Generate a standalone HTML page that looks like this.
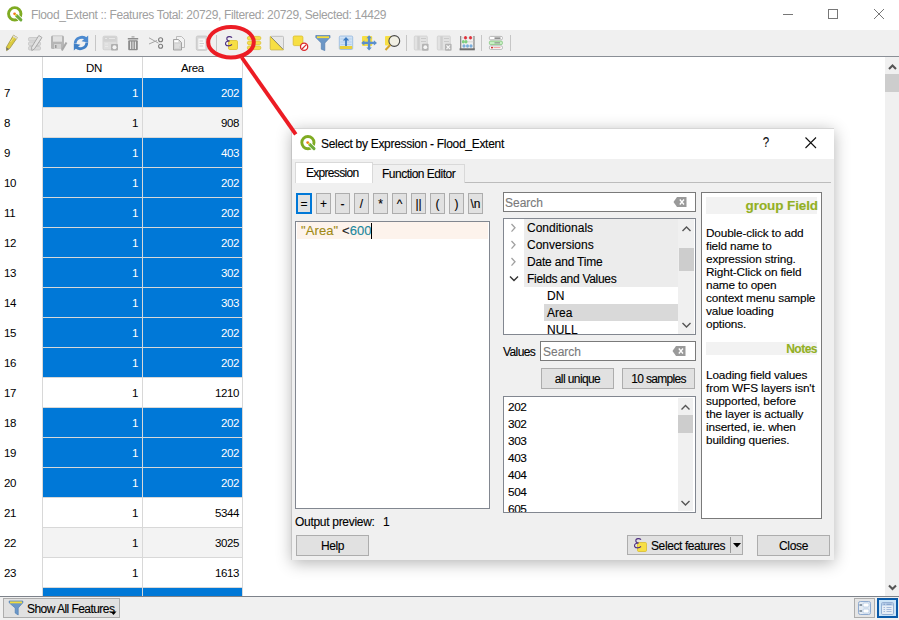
<!DOCTYPE html>
<html><head><meta charset="utf-8">
<style>
*{margin:0;padding:0;box-sizing:border-box}
html,body{width:899px;height:620px;overflow:hidden;background:#fff;font-family:"Liberation Sans",sans-serif;font-size:12px;color:#000;position:relative}
.abs{position:absolute}
#title{position:absolute;left:0;top:0;width:899px;height:30px;background:#fff}
#title .t{position:absolute;left:31px;top:8px;font-size:12px;letter-spacing:-0.35px;color:#a0a0a0;white-space:nowrap}
#toolbar{position:absolute;left:0;top:30px;width:899px;height:26px;background:#f0f0f0}
#tbline{position:absolute;left:0;top:56px;width:899px;height:1px;background:#8a8f96}
#hdr{position:absolute;left:42px;top:57px;width:201px;height:21px;background:#fff;border-left:1px solid #d8d8d8;border-right:1px solid #d8d8d8}
#hdr:after{content:"";position:absolute;left:99px;top:0;width:1px;height:21px;background:#d8d8d8}
.h{position:absolute;top:5px;font-size:11.5px;color:#000;letter-spacing:-0.4px}
.rn{position:absolute;left:4px;width:36px;height:30px;line-height:31px;font-size:11.5px;letter-spacing:-0.3px}
.r{position:absolute;left:42px;width:201px;height:30px;border-left:1px solid #d8d8d8}
.r .c1,.r .c2{position:absolute;top:0;height:30px;line-height:31px;text-align:right;font-size:11.5px;letter-spacing:-0.4px;border-bottom:1px solid #d8d8d8;border-right:1px solid #d8d8d8}
.r .c1{left:0;width:100px;padding-right:4px}
.r .c2{left:100px;width:100px;padding-right:3px}
.r.s{background:#0078d7;color:#fff}
.r.a{background:#f3f3f3}
.r.w{background:#fff}
#vscroll{position:absolute;left:885px;top:57px;width:14px;height:539px;background:#f0f0f0}
#status{position:absolute;left:0;top:596px;width:899px;height:24px;background:#f0f0f0;border-top:1px solid #7d828a}
#dlg{position:absolute;left:292px;top:128px;width:542px;height:432px;background:#f0f0f0;box-shadow:0 3px 15px rgba(0,0,0,0.3);}
#dlgt{position:absolute;left:0;top:0;width:542px;height:31px;background:#fff}

#dlg *{position:absolute}
#dlg .tt{left:29px;top:9px;font-size:12px;letter-spacing:-0.3px;white-space:nowrap;color:#000}
.btn{background:#e1e1e1;border:1px solid #adadad;text-align:center;font-size:12px;color:#000;white-space:nowrap}
.ob{top:65px;width:15px;height:21px;line-height:21px;font-size:12px}
.box{background:#fff;border:1px solid #7a7a7a}
.lbl{white-space:nowrap;font-size:12px}
.ti{left:0;height:17px;line-height:17px;font-size:12px;white-space:nowrap}
.help{font-family:"Liberation Sans",sans-serif;font-size:11.8px;line-height:13px;letter-spacing:-0.15px;color:#000}
.sb{background:#f0f0f0}
#dlg div,#status div{-webkit-text-stroke:0.12px currentColor}
</style></head><body>
<div id="title">
<svg class="abs" style="left:0;top:0" width="30" height="30">
 <circle cx="14.75" cy="13.8" r="6.2" fill="none" stroke="#7fab22" stroke-width="2.9"/>
 <path d="M16.5,15.6 L20.9,19.9" stroke="#fff" stroke-width="4.6"/>
 <path d="M16.5,15.6 L20.9,19.9" stroke="#6fac3a" stroke-width="3" stroke-linecap="round"/>
 <circle cx="14.6" cy="13.8" r="1.4" fill="#f07a1a"/>
 <circle cx="15.8" cy="14.9" r="1" fill="#f3d64a"/>
</svg>
<div class="t">Flood_Extent :: Features Total: 20729, Filtered: 20729, Selected: 14429</div>
<svg class="abs" style="left:770px;top:0" width="129" height="30">
 <path d="M13,14.5 H23" stroke="#777" stroke-width="1"/>
 <rect x="58.5" y="9.5" width="9" height="9" fill="none" stroke="#777" stroke-width="1"/>
 <path d="M104,9 L114,19 M114,9 L104,19" stroke="#777" stroke-width="1"/>
</svg>
</div>
<div id="toolbar"></div>

<svg class="abs" style="left:0;top:30px" width="520" height="26" viewBox="0 30 520 26">
 <!-- pencil -->
 <path d="M13.5,35.2 L17.3,37.6 L9.6,48.6 L6.6,50.6 L6.4,47.2 Z" fill="#dccb3e" stroke="#9f9446" stroke-width="0.8"/>
 <path d="M14.3,36.6 L10.5,42" stroke="#f3e88a" stroke-width="0.8"/>
 <path d="M13.5,35.2 L17.3,37.6 L16.4,38.9 L12.6,36.5 Z" fill="#dcdcdc"/>
 <path d="M6.6,50.6 L6.4,47.3 L9,49 Z" fill="#707070"/>
 <!-- edit multi -->
 <g fill="#dadada" stroke="#c4c4c4" stroke-width="0.8">
  <rect x="28.5" y="37.5" width="12" height="3.5" rx="1.2"/>
  <rect x="28.5" y="42" width="12" height="3.5" rx="1.2"/>
  <rect x="28.5" y="46.5" width="12" height="3.5" rx="1.2"/>
 </g>
 <path d="M38.8,35.5 L42,37.5 L34.5,48.8 L31.8,50.6 L31.6,47.3 Z" fill="#e4e4e4" stroke="#999" stroke-width="0.8"/>
 <!-- save -->
 <rect x="51" y="35.6" width="13" height="13.4" rx="1.5" fill="#b6b6b6"/>
 <rect x="53" y="36.2" width="9" height="5.5" fill="#e2e2e2"/>
 <rect x="54" y="44" width="7" height="5" fill="#d2d2d2"/>
 <rect x="55" y="45" width="1.5" height="3" fill="#9a9a9a"/>
 <path d="M66.5,42.5 L61.8,50.5" stroke="#a8a8a8" stroke-width="2"/>
 <!-- refresh -->
 <path d="M75.2,43.5 C75.2,37.5 83,35.5 86.3,39.2" fill="none" stroke="#4c8ad0" stroke-width="2.8"/>
 <path d="M88.2,35.4 L88.2,42.6 L81.6,41.2 Z" fill="#4c8ad0"/>
 <path d="M86.8,42.5 C86.8,48.5 79,50.5 75.7,46.8" fill="none" stroke="#3f7fc6" stroke-width="2.8"/>
 <path d="M73.8,50.4 L73.8,43.4 L80.4,44.8 Z" fill="#3f7fc6"/>
 <rect x="95" y="35" width="1" height="16" fill="#c6c6c6"/>
 <!-- table gear -->
 <rect x="103" y="36.2" width="14" height="13.6" rx="1.2" fill="#dedede" stroke="#cdcdcd" stroke-width="0.8"/>
 <rect x="103.5" y="36.7" width="13" height="5" fill="#d2d2d2"/>
 <path d="M105,38.5 H107 M109,38.5 H115 M105,44 H108 M105,46.5 H108" stroke="#ececec" stroke-width="0.8"/>
 <rect x="111" y="44" width="7" height="6.5" rx="1" fill="#b0b0b0"/>
 <circle cx="114.5" cy="47.2" r="2" fill="#f4f4f4"/>
 <!-- trash -->
 <rect x="127.8" y="38" width="10.4" height="1.5" fill="#8c8c8c"/>
 <rect x="131.5" y="36.3" width="3" height="1.2" fill="#a0a0a0"/>
 <rect x="128.2" y="40.2" width="9.6" height="10" rx="1" fill="#8c8c8c"/>
 <path d="M130.6,41.5 V49 M133,41.5 V49 M135.4,41.5 V49" stroke="#e8e8e8" stroke-width="1.1"/>
 <!-- scissors -->
 <path d="M149,37.8 L158.5,43.2 M149,44 L157,40.5" stroke="#a6a6a6" stroke-width="1"/>
 <circle cx="160.6" cy="39.8" r="2" fill="none" stroke="#7c7c7c" stroke-width="1.1"/>
 <circle cx="160.6" cy="46.2" r="2" fill="none" stroke="#7c7c7c" stroke-width="1.1"/>
 <!-- copy -->
 <path d="M176.5,36.5 H181.5 L184.5,39.5 V47.5 H176.5 Z" fill="#f2f2f2" stroke="#b6b6b6" stroke-width="0.9"/>
 <path d="M173.5,39.5 H178.5 L181.5,42.5 V50 H173.5 Z" fill="#d4d4d4" stroke="#9c9c9c" stroke-width="0.9"/>
 <rect x="174.3" y="40.2" width="4" height="2" fill="#fff"/>
 <path d="M175,45 H180 M175,47 H179" stroke="#eee" stroke-width="0.7"/>
 <!-- paste -->
 <rect x="196.3" y="36" width="11" height="14.3" rx="1.5" fill="#d6d6d6" stroke="#c4c4c4" stroke-width="0.8"/>
 <rect x="198.3" y="38.5" width="7" height="10.5" fill="#f6f6f6"/>
 <path d="M199.5,41 H203 M199.5,43.5 H204 M199.5,46 H203" stroke="#c8c8c8" stroke-width="0.8"/>
 <rect x="216" y="35" width="1" height="16" fill="#c6c6c6"/>
 <!-- select by expression -->
 <rect x="228.5" y="40.5" width="9" height="9" rx="1.2" fill="#f7df44" stroke="#d9bd2f" stroke-width="0.8"/>
 <path d="M232,37.8 C231,36.2 226.8,36 226.8,38.7 C226.8,40.3 228.3,41 229.8,41 C227.2,41 225.5,42 225.5,43.7 C225.5,46.3 229.8,46.5 232,44.5" fill="none" stroke="#4e2f80" stroke-width="1.05"/>
 <!-- select all rows -->
 <g fill="#f6de4a" stroke="#dcc232" stroke-width="0.8">
  <rect x="247.4" y="36.4" width="13.4" height="3.4" rx="1.5"/>
  <rect x="247.4" y="41.2" width="13.4" height="3.4" rx="1.5"/>
  <rect x="247.4" y="46" width="13.4" height="3.6" rx="1.5"/>
 </g>
 <path d="M253,36.5 V49.5" stroke="#efd85a" stroke-width="0.6"/>
 <!-- invert selection -->
 <rect x="270.3" y="36.3" width="13.2" height="13.5" rx="1" fill="#e8e8e8" stroke="#b4b4b4" stroke-width="0.8"/>
 <path d="M270.3,36.3 L283.5,49.8 H271.3 Q270.3,49.8 270.3,48.8 Z" fill="#f7df44" stroke="#d9bd2f" stroke-width="0.7"/>
 <path d="M271,37 L283,49.2" stroke="#7a7a7a" stroke-width="0.8"/>
 <!-- deselect -->
 <rect x="293.2" y="36" width="9.7" height="9.6" rx="1.3" fill="#f7df44" stroke="#d9bd2f" stroke-width="0.8"/>
 <circle cx="304.1" cy="46.8" r="3.6" fill="#fff" stroke="#d9282c" stroke-width="1.3"/>
 <path d="M302,49 L306.3,44.6" stroke="#d9282c" stroke-width="1.2"/>
 <!-- filter -->
 <path d="M315.8,35.5 H330 V37.5 L324.8,43 V50.6 L321.3,49.2 V43 L315.8,37.5 Z" fill="#6b96c6" stroke="#5680b0" stroke-width="0.7"/>
 <rect x="317" y="36.3" width="12" height="1.8" fill="#f6dc3a"/>
 <!-- move selection to top -->
 <rect x="339.3" y="36" width="13.4" height="13.5" rx="1.2" fill="#cfe2f5" stroke="#94b8de" stroke-width="0.8"/>
 <path d="M340.5,39 H351.5 M340.5,42 H351.5 M340.5,44.5 H351.5" stroke="#a9c7e6" stroke-width="0.7"/>
 <rect x="339.8" y="46" width="12.4" height="3" fill="#e9cf3a"/>
 <path d="M346,46 V38.5" stroke="#3d7ac0" stroke-width="1.8"/>
 <path d="M342.8,40.5 L346,37 L349.2,40.5 Z" fill="#3d7ac0"/>
 <!-- pan map to selected -->
 <rect x="362" y="36" width="10.2" height="10" rx="1" fill="#f7df44"/>
 <g fill="#5b8fcc">
  <path d="M369.1,35.2 L371.8,38.3 H366.4 Z M369.1,50.6 L371.8,47.5 H366.4 Z M361.2,42.9 L364.3,40.2 V45.6 Z M377,42.9 L373.9,40.2 V45.6 Z"/>
  <rect x="367.9" y="38" width="2.4" height="10"/>
  <rect x="364" y="41.7" width="10" height="2.4"/>
 </g>
 <!-- zoom to selection -->
 <rect x="385" y="36" width="7.5" height="9.5" rx="1" fill="#f7df44"/>
 <circle cx="394.3" cy="41" r="5.4" fill="#f2f0e4" stroke="#4a4a4a" stroke-width="1.1"/>
 <path d="M390.2,45 L385.5,50" stroke="#d6a62a" stroke-width="2"/>
 <rect x="406" y="35" width="1" height="16" fill="#c6c6c6"/>
 <!-- new field -->
 <rect x="414.3" y="36" width="13" height="14" rx="1" fill="#e2e2e2" stroke="#d0d0d0" stroke-width="0.8"/>
 <rect x="417.3" y="36.3" width="2.5" height="13.4" fill="#cfcfcf"/>
 <path d="M421,38.5 H426 M421,41.5 H426" stroke="#c4c4c4" stroke-width="0.8"/>
 <rect x="422" y="43.7" width="6.6" height="7" rx="1" fill="#b4b4b4"/>
 <circle cx="425.3" cy="47.2" r="1.9" fill="#f6f6f6"/>
 <!-- delete field -->
 <rect x="437.3" y="36" width="13" height="14" rx="1" fill="#e2e2e2" stroke="#d0d0d0" stroke-width="0.8"/>
 <rect x="440.3" y="36.3" width="2.5" height="13.4" fill="#cfcfcf"/>
 <path d="M444,38.5 H449 M444,41.5 H449" stroke="#c4c4c4" stroke-width="0.8"/>
 <rect x="445" y="43.7" width="6.6" height="7" rx="1" fill="#b4b4b4"/>
 <path d="M446.5,45.3 L450,49 M450,45.3 L446.5,49" stroke="#f6f6f6" stroke-width="1.2"/>
 <!-- field calculator -->
 <rect x="460" y="36" width="1.3" height="13" fill="#8a8a8a"/>
 <rect x="473.3" y="36" width="1.3" height="13" fill="#8a8a8a"/>
 <rect x="459.6" y="48.3" width="15.2" height="2" fill="#6e6e6e"/>
 <path d="M461,37.8 H473.5 M461,41.8 H473.5 M461,46 H473.5" stroke="#d0d0d0" stroke-width="0.8"/>
 <g fill="#e0303a"><ellipse cx="465.5" cy="37.8" rx="1.5" ry="1.8"/><ellipse cx="470.5" cy="37.8" rx="1.5" ry="1.8"/></g>
 <g fill="#7fcf7f"><ellipse cx="463.3" cy="41.8" rx="1.5" ry="1.8"/><ellipse cx="466" cy="41.8" rx="1.5" ry="1.8"/></g>
 <g fill="#7aaedc"><ellipse cx="464" cy="46" rx="1.5" ry="1.8"/><ellipse cx="467.5" cy="46" rx="1.5" ry="1.8"/><ellipse cx="471" cy="46" rx="1.5" ry="1.8"/></g>
 <rect x="481" y="35" width="1" height="16" fill="#c6c6c6"/>
 <!-- conditional formatting -->
 <rect x="489.4" y="36.4" width="13" height="3.4" rx="1.2" fill="#fff" stroke="#aaa" stroke-width="0.8"/>
 <path d="M494.5,38.1 H500.5" stroke="#555" stroke-width="1.1"/>
 <rect x="489.4" y="41.1" width="13" height="3.5" rx="1.2" fill="#c9f0c5" stroke="#7fc47a" stroke-width="0.8"/>
 <path d="M494.5,42.85 H500" stroke="#909a90" stroke-width="1.3"/>
 <rect x="489.4" y="45.9" width="13" height="3.5" rx="1.2" fill="#fff" stroke="#aaa" stroke-width="0.8"/>
 <circle cx="492" cy="47.6" r="0.9" fill="#c00"/>
 <path d="M493.5,47.6 H500.5" stroke="#f6a0a0" stroke-width="1"/>
 <rect x="510" y="35" width="1" height="16" fill="#c6c6c6"/>
</svg>

<div id="tbline"></div>
<div id="hdr"><div class="h" style="left:43px">DN</div><div class="h" style="left:138px">Area</div></div>
<div class="rn" style="top:78px">7</div><div class="r s" style="top:78px"><div class="c1">1</div><div class="c2">202</div></div>
<div class="rn" style="top:108px">8</div><div class="r a" style="top:108px"><div class="c1">1</div><div class="c2">908</div></div>
<div class="rn" style="top:138px">9</div><div class="r s" style="top:138px"><div class="c1">1</div><div class="c2">403</div></div>
<div class="rn" style="top:168px">10</div><div class="r s" style="top:168px"><div class="c1">1</div><div class="c2">202</div></div>
<div class="rn" style="top:198px">11</div><div class="r s" style="top:198px"><div class="c1">1</div><div class="c2">202</div></div>
<div class="rn" style="top:228px">12</div><div class="r s" style="top:228px"><div class="c1">1</div><div class="c2">202</div></div>
<div class="rn" style="top:258px">13</div><div class="r s" style="top:258px"><div class="c1">1</div><div class="c2">302</div></div>
<div class="rn" style="top:288px">14</div><div class="r s" style="top:288px"><div class="c1">1</div><div class="c2">303</div></div>
<div class="rn" style="top:318px">15</div><div class="r s" style="top:318px"><div class="c1">1</div><div class="c2">202</div></div>
<div class="rn" style="top:348px">16</div><div class="r s" style="top:348px"><div class="c1">1</div><div class="c2">202</div></div>
<div class="rn" style="top:378px">17</div><div class="r w" style="top:378px"><div class="c1">1</div><div class="c2">1210</div></div>
<div class="rn" style="top:408px">18</div><div class="r s" style="top:408px"><div class="c1">1</div><div class="c2">202</div></div>
<div class="rn" style="top:438px">19</div><div class="r s" style="top:438px"><div class="c1">1</div><div class="c2">202</div></div>
<div class="rn" style="top:468px">20</div><div class="r s" style="top:468px"><div class="c1">1</div><div class="c2">202</div></div>
<div class="rn" style="top:498px">21</div><div class="r w" style="top:498px"><div class="c1">1</div><div class="c2">5344</div></div>
<div class="rn" style="top:528px">22</div><div class="r a" style="top:528px"><div class="c1">1</div><div class="c2">3025</div></div>
<div class="rn" style="top:558px">23</div><div class="r w" style="top:558px"><div class="c1">1</div><div class="c2">1613</div></div>
<div class="rn" style="top:588px">24</div><div class="r s" style="top:588px"><div class="c1"></div><div class="c2"></div></div>
<div id="vscroll">
 <svg class="abs" style="left:0;top:0" width="16" height="539">
  <path d="M4,12 L7.5,8.5 L11,12" fill="none" stroke="#555" stroke-width="2.1"/>
  <rect x="0" y="17" width="14" height="18" fill="#cdcdcd"/>
  <path d="M4,528.5 L7.5,532 L11,528.5" fill="none" stroke="#555" stroke-width="2.1"/>
 </svg>
</div>
<div id="status">
 <div class="btn" style="position:absolute;left:3px;top:1px;width:117px;height:20px;border-color:#adadad"></div>
 <svg class="abs" style="left:8px;top:2px" width="18" height="18">
  <path d="M1.2,2 H14.8 V3.8 L10.2,9 V16 L7.2,14 V9 L1.2,3.8 Z" fill="#6b97c8" stroke="#4f7fb3" stroke-width="0.7"/>
  <rect x="2" y="2.5" width="12" height="1.8" fill="#f4dc3c"/>
 </svg>
 <div class="abs" style="left:27px;top:5px;font-size:12px;letter-spacing:-0.55px;white-space:nowrap">Show All Features</div>
 <svg class="abs" style="left:110px;top:14px" width="8" height="6"><path d="M0.5,0.5 H6.5 L3.5,4 Z" fill="#000"/></svg>
 <div class="abs" style="left:854px;top:1px;width:21px;height:20px;background:#e5e5e5;border:1px solid #adadad"></div>
 <svg class="abs" style="left:854px;top:1px" width="21" height="20">
  <rect x="4.5" y="3.5" width="12" height="13" rx="1.8" fill="#e4ebf3" stroke="#8eaad0" stroke-width="1"/>
  <rect x="9" y="5" width="6" height="4" rx="1" fill="#fff" stroke="#9bb8dc" stroke-width="0.6"/>
  <rect x="9" y="11" width="6" height="4" rx="1" fill="#fff" stroke="#9bb8dc" stroke-width="0.6"/>
  <path d="M5.5,7 H8 M5.5,13 H8" stroke="#345" stroke-width="1"/>
 </svg>
 <div class="abs" style="left:877px;top:1px;width:21px;height:20px;background:#cce4f7;border:2px solid #0a5aa8"></div>
 <svg class="abs" style="left:877px;top:1px" width="21" height="20">
  <rect x="4.5" y="4.5" width="12" height="12" rx="1.2" fill="#e6edf5" stroke="#8eaad0" stroke-width="0.9"/>
  <rect x="5" y="5" width="11" height="2.6" fill="#b4cae6"/>
  <path d="M6.5,6.3 H8 M9.5,6.3 H14.5" stroke="#6f90c0" stroke-width="0.8"/>
  <path d="M6.5,9.5 H8 M9.5,9.5 H14.5 M6.5,11.5 H8 M9.5,11.5 H14.5 M6.5,13.5 H8 M9.5,13.5 H14.5" stroke="#9db6d8" stroke-width="0.9"/>
 </svg>
</div>
<div id="dlg">
 <div id="dlgt" style="position:absolute"></div>
 <div style="left:0;top:0;width:542px;height:1px;background:#d6d6d6"></div>
 <div style="left:-1px;top:0;width:1px;height:432px;background:rgba(0,0,0,0.1)"></div>
 <svg style="left:7px;top:7px" width="18" height="18">
  <circle cx="8.9" cy="7.6" r="6.1" fill="none" stroke="#7fab22" stroke-width="2.9"/>
  <path d="M10.6,9.4 L15,13.6" stroke="#fff" stroke-width="4.6"/>
  <path d="M10.6,9.4 L15,13.6" stroke="#6fac3a" stroke-width="3" stroke-linecap="round"/>
  <circle cx="8.7" cy="7.6" r="1.4" fill="#f07a1a"/>
  <circle cx="9.9" cy="8.7" r="1" fill="#f3d64a"/>
 </svg>
 <div class="tt">Select by Expression - Flood_Extent</div>
 <div style="left:470px;top:6px;font-size:14.5px;color:#111;transform:scaleX(0.8)">?</div>
 <svg style="left:512px;top:8px" width="14" height="14"><path d="M1.5,1.5 L12,12 M12,1.5 L1.5,12" stroke="#111" stroke-width="1.1"/></svg>
 <!-- tabs -->
 <div style="left:3px;top:54px;width:536px;height:1px;background:#bcbcbc"></div>
 <div style="left:80px;top:36px;width:93px;height:19px;background:#f0f0f0;border:1px solid #d9d9d9;border-bottom:none"></div>
 <div style="left:90px;top:39px;font-size:12px;letter-spacing:-0.5px;white-space:nowrap">Function Editor</div>
 <div style="left:3px;top:34px;width:78px;height:21px;background:#fff;border:1px solid #d9d9d9;border-bottom:none"></div>
 <div style="left:14px;top:38px;font-size:12px;letter-spacing:-0.7px;white-space:nowrap">Expression</div>
 <div class="btn ob" style="left:4px;width:16px;border:2px solid #0078d7;line-height:19px">=</div><div class="btn ob" style="left:24px">+</div><div class="btn ob" style="left:43px">-</div><div class="btn ob" style="left:62px">/</div><div class="btn ob" style="left:81px">*</div><div class="btn ob" style="left:100px">^</div><div class="btn ob" style="left:119px">||</div><div class="btn ob" style="left:138px">(</div><div class="btn ob" style="left:157px">)</div><div class="btn ob" style="left:176px">\n</div>
 <!-- expression editor -->
 <div class="box" style="left:3px;top:93px;width:195px;height:288px;border-color:#828790">
  <div style="left:1px;top:0px;width:191px;height:17px;background:#fdf3ec"></div>
  <div style="left:5px;top:1px;font-size:13px;white-space:nowrap;letter-spacing:0.1px"><span style="position:static;color:#a08a14">"Area"</span><span style="position:static;color:#222"> &lt;</span><span style="position:static;color:#1b879c">600</span></div>
  <div style="left:75px;top:1px;width:1px;height:16px;background:#000"></div>
 </div>
 <div class="lbl" style="left:3px;top:387px;letter-spacing:-0.3px">Output preview:</div>
 <div class="lbl" style="left:91px;top:387px">1</div>
 <div class="btn" style="left:4px;top:407px;width:73px;height:21px;line-height:21px;letter-spacing:-0.4px">Help</div>
 <!-- function search -->
 <div class="box" style="left:211px;top:64px;width:193px;height:20px">
  <div style="left:1px;top:3px;font-size:12px;color:#7a7a7a">Search</div>
  <svg style="left:169px;top:3px" width="15" height="12"><path d="M4,1 H13.5 V11 H4 L0.5,6 Z" fill="#9a9a9a"/><path d="M6.8,3.5 L11,8.5 M11,3.5 L6.8,8.5" stroke="#fff" stroke-width="1.3"/></svg>
 </div>
 <!-- tree -->
 <div class="box" style="left:211px;top:90px;width:193px;height:117px;overflow:hidden;border-color:#828790">
  <div style="left:20px;top:0px;width:154px;height:68px;background:#ececec"></div>
  <div style="left:40px;top:85px;width:134px;height:17px;background:#d9d9d9"></div>
  <svg style="left:0;top:0" width="20" height="115">
   <path d="M7.5,5 L11,8.8 L7.5,12.6" fill="none" stroke="#a0a0a0" stroke-width="1.3"/>
   <path d="M7.5,22 L11,25.8 L7.5,29.6" fill="none" stroke="#a0a0a0" stroke-width="1.3"/>
   <path d="M7.5,39 L11,42.8 L7.5,46.6" fill="none" stroke="#a0a0a0" stroke-width="1.3"/>
   <path d="M6,57.5 L10,61.5 L14,57.5" fill="none" stroke="#333" stroke-width="1.4"/>
  </svg>
  <div class="ti" style="left:23px;top:1px">Conditionals</div>
  <div class="ti" style="left:23px;top:18px">Conversions</div>
  <div class="ti" style="left:23px;top:35px;letter-spacing:-0.2px">Date and Time</div>
  <div class="ti" style="left:23px;top:52px;letter-spacing:-0.3px">Fields and Values</div>
  <div class="ti" style="left:43px;top:69px">DN</div>
  <div class="ti" style="left:43px;top:86px">Area</div>
  <div class="ti" style="left:43px;top:103px">NULL</div>
  <div class="sb" style="left:174px;top:0;width:16px;height:115px">
   <svg style="left:0;top:0" width="17" height="115">
    <path d="M4.5,12 L8.5,8 L12.5,12" fill="none" stroke="#555" stroke-width="1.4"/>
    <rect x="1" y="29" width="15" height="23" fill="#cdcdcd"/>
    <path d="M4.5,104 L8.5,108 L12.5,104" fill="none" stroke="#555" stroke-width="1.4"/>
   </svg>
  </div>
 </div>
 <!-- values -->
 <div class="lbl" style="left:211px;top:217px;letter-spacing:-0.6px">Values</div>
 <div class="box" style="left:248px;top:213px;width:156px;height:20px">
  <div style="left:2px;top:3px;font-size:12px;color:#7a7a7a">Search</div>
  <svg style="left:131px;top:3px" width="15" height="12"><path d="M4,1 H13.5 V11 H4 L0.5,6 Z" fill="#9a9a9a"/><path d="M6.8,3.5 L11,8.5 M11,3.5 L6.8,8.5" stroke="#fff" stroke-width="1.3"/></svg>
 </div>
 <div class="btn" style="left:249px;top:240px;width:73px;height:21px;line-height:21px;letter-spacing:-0.6px">all unique</div>
 <div class="btn" style="left:330px;top:240px;width:73px;height:21px;line-height:21px;letter-spacing:-0.7px">10 samples</div>
 <div class="box" style="left:211px;top:268px;height:117px;overflow:hidden;border-color:#828790;width:193px">
  <div class="ti" style="left:4px;top:2px;font-size:11.8px;letter-spacing:-0.4px">202</div><div class="ti" style="left:4px;top:19px;font-size:11.8px;letter-spacing:-0.4px">302</div><div class="ti" style="left:4px;top:36px;font-size:11.8px;letter-spacing:-0.4px">303</div><div class="ti" style="left:4px;top:53px;font-size:11.8px;letter-spacing:-0.4px">403</div><div class="ti" style="left:4px;top:70px;font-size:11.8px;letter-spacing:-0.4px">404</div><div class="ti" style="left:4px;top:87px;font-size:11.8px;letter-spacing:-0.4px">504</div><div class="ti" style="left:4px;top:104px;font-size:11.8px;letter-spacing:-0.4px">605</div>
  <div class="sb" style="left:174px;top:1px;width:15px;height:113px">
   <svg style="left:0;top:0" width="15" height="113">
    <path d="M3.5,11.5 L7.5,7.5 L11.5,11.5" fill="none" stroke="#555" stroke-width="1.4"/>
    <rect x="0" y="17" width="15" height="18" fill="#cdcdcd"/>
    <path d="M3.5,103 L7.5,107 L11.5,103" fill="none" stroke="#555" stroke-width="1.4"/>
   </svg>
  </div>
 </div>
 <!-- help panel -->
 <div class="box" style="left:409px;top:64px;width:121px;height:327px;border-color:#7a7a7a">
  <div style="left:4px;top:4px;width:111px;height:17px;background:#f2f2f2"></div>
  <div style="right:3px;top:5px;font-weight:bold;font-size:13.5px;color:#93b023;white-space:nowrap;letter-spacing:-0.1px">group Field</div>
  <div class="help" style="left:4px;top:34px;width:118px">Double-click to add<br>field name to<br>expression string.<br>Right-Click on field<br>name to open<br>context menu sample<br>value loading<br>options.</div>
  <div style="left:4px;top:149px;width:111px;height:13px;background:#f2f2f2"></div>
  <div style="right:4px;top:149px;font-weight:bold;font-size:12px;color:#93b023;white-space:nowrap;letter-spacing:-0.5px">Notes</div>
  <div class="help" style="left:4px;top:176px;width:118px">Loading field values<br>from WFS layers isn't<br>supported, before<br>the layer is actually<br>inserted, ie. when<br>building queries.</div>
 </div>
 <!-- bottom buttons -->
 <div class="btn" style="left:335px;top:407px;width:116px;height:20px"></div>
 <svg style="left:340px;top:409px" width="18" height="16">
  <rect x="5.5" y="5.5" width="9" height="9" rx="1.2" fill="#f7df44" stroke="#d9bd2f" stroke-width="0.8"/>
  <path d="M9,2.8 C8,1.2 3.8,1 3.8,3.7 C3.8,5.3 5.3,6 6.8,6 C4.2,6 2.5,7 2.5,8.7 C2.5,11.3 6.8,11.5 9,9.5" fill="none" stroke="#4e2f80" stroke-width="1.05"/>
 </svg>
 <div class="lbl" style="left:359px;top:411px;letter-spacing:-0.4px">Select features</div>
 <div style="left:438px;top:409px;width:1px;height:16px;background:#9a9a9a"></div>
 <svg style="left:440px;top:413px" width="10" height="8"><path d="M1,2 H9 L5,6.5 Z" fill="#000"/></svg>
 <div class="btn" style="left:465px;top:407px;width:73px;height:21px;line-height:21px;letter-spacing:-0.3px">Close</div>
</div>
<svg class="abs" style="left:0;top:0" width="899" height="620">
 <ellipse cx="231" cy="42.2" rx="22.8" ry="15.3" fill="none" stroke="#ec1c24" stroke-width="4"/>
 <path d="M241.8,57.5 L295.8,134.3" stroke="#ec1c24" stroke-width="3.9"/>
</svg>
</body></html>
